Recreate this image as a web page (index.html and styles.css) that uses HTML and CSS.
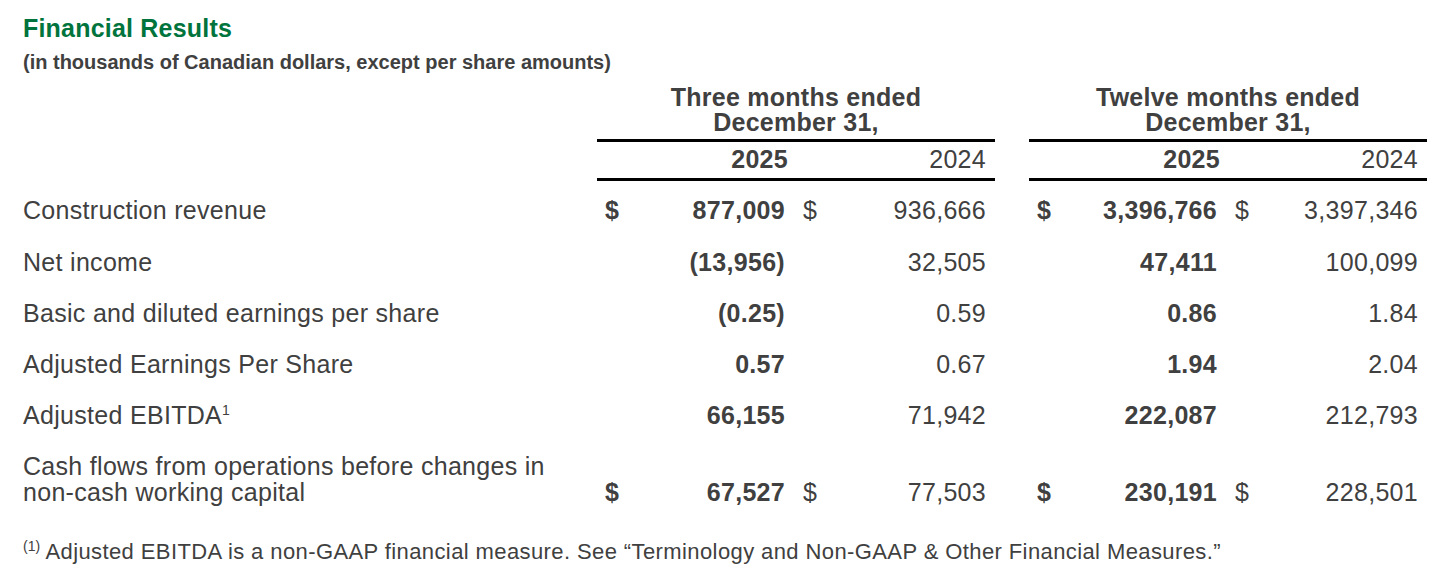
FILE: index.html
```html
<!DOCTYPE html>
<html>
<head>
<meta charset="utf-8">
<link rel="stylesheet" href="styles.css">
</head>
<body>
<div class="page">
  <h1 class="title">Financial Results</h1>
  <p class="subtitle">(in thousands of Canadian dollars, except per share amounts)</p>
  <table class="fin">
    <colgroup>
      <col class="c-label">
      <col class="c-cur"><col class="c-val"><col class="c-cur2"><col class="c-val2">
      <col class="c-gap">
      <col class="c-cur"><col class="c-val"><col class="c-cur2"><col class="c-val2">
    </colgroup>
    <thead>
      <tr class="period">
        <th></th>
        <th colspan="4" class="grp">Three months ended<br>December 31,</th>
        <th></th>
        <th colspan="4" class="grp">Twelve months ended<br>December 31,</th>
      </tr>
      <tr class="years">
        <th></th>
        <th colspan="2" class="yr cur-yr">2025</th>
        <th colspan="2" class="yr prev-yr">2024</th>
        <th></th>
        <th colspan="2" class="yr cur-yr">2025</th>
        <th colspan="2" class="yr prev-yr">2024</th>
      </tr>
    </thead>
    <tbody>
      <tr>
        <td class="label">Construction revenue</td>
        <td class="cur b">$</td><td class="val b">877,009</td><td class="cur2">$</td><td class="val2">936,666</td>
        <td></td>
        <td class="cur b">$</td><td class="val b">3,396,766</td><td class="cur2">$</td><td class="val2">3,397,346</td>
      </tr>
      <tr>
        <td class="label">Net income</td>
        <td class="cur"></td><td class="val b">(13,956)</td><td class="cur2"></td><td class="val2">32,505</td>
        <td></td>
        <td class="cur"></td><td class="val b">47,411</td><td class="cur2"></td><td class="val2">100,099</td>
      </tr>
      <tr>
        <td class="label">Basic and diluted earnings per share</td>
        <td class="cur"></td><td class="val b">(0.25)</td><td class="cur2"></td><td class="val2">0.59</td>
        <td></td>
        <td class="cur"></td><td class="val b">0.86</td><td class="cur2"></td><td class="val2">1.84</td>
      </tr>
      <tr>
        <td class="label">Adjusted Earnings Per Share</td>
        <td class="cur"></td><td class="val b">0.57</td><td class="cur2"></td><td class="val2">0.67</td>
        <td></td>
        <td class="cur"></td><td class="val b">1.94</td><td class="cur2"></td><td class="val2">2.04</td>
      </tr>
      <tr>
        <td class="label">Adjusted EBITDA<sup class="fn">1</sup></td>
        <td class="cur"></td><td class="val b">66,155</td><td class="cur2"></td><td class="val2">71,942</td>
        <td></td>
        <td class="cur"></td><td class="val b">222,087</td><td class="cur2"></td><td class="val2">212,793</td>
      </tr>
      <tr>
        <td class="label">Cash flows from operations before changes in<br>non-cash working capital</td>
        <td class="cur b">$</td><td class="val b">67,527</td><td class="cur2">$</td><td class="val2">77,503</td>
        <td></td>
        <td class="cur b">$</td><td class="val b">230,191</td><td class="cur2">$</td><td class="val2">228,501</td>
      </tr>
    </tbody>
  </table>
  <p class="footnote"><sup class="fn-mark">(1)</sup> Adjusted EBITDA is a non-GAAP financial measure. See “Terminology and Non-GAAP &amp; Other Financial Measures.”</p>
</div>
</body>
</html>
```

FILE: styles.css
```css
html, body {
  margin: 0;
  padding: 0;
  background: #ffffff;
}

body {
  font-family: "Liberation Sans", Arial, sans-serif;
  color: #404040;
}

.page {
  padding: 0 23px;
  width: 1404px;
}

.title {
  margin: 0;
  padding-top: 15.3px;
  font-size: 25px;
  line-height: 26px;
  font-weight: bold;
  letter-spacing: 0.2px;
  color: #00743c;
}

.subtitle {
  margin: 10.2px 0 0 0;
  font-size: 20px;
  line-height: 22px;
  font-weight: bold;
  letter-spacing: 0;
}

.fin {
  border-collapse: separate;
  border-spacing: 0;
  table-layout: fixed;
  width: 1404px;
  font-size: 25px;
  letter-spacing: 0.3px;
  margin-top: 11.2px;
}

.c-label { width: 574px; }
.c-cur { width: 43px; }
.c-val { width: 150px; }
.c-cur2 { width: 50px; }
.c-val2 { width: 155px; }
.c-gap { width: 34px; }

.fin th, .fin td {
  padding: 0;
  vertical-align: bottom;
  white-space: nowrap;
}

.fin .period th {
  line-height: 25.5px;
  font-weight: bold;
  letter-spacing: 0.25px;
}

.fin .grp {
  text-align: center;
  padding-bottom: 3px;
  border-bottom: 3px solid #000;
}

.fin .years th {
  line-height: 26px;
  padding-top: 4.2px;
  padding-bottom: 6.3px;
}

.fin .yr {
  border-bottom: 3px solid #000;
  text-align: right;
}

.fin .cur-yr {
  font-weight: bold;
  padding-right: 2px;
}

.fin .prev-yr {
  font-weight: normal;
  padding-right: 9px;
}

.fin tbody td {
  line-height: 26px;
  padding-top: 12.6px;
  padding-bottom: 12.6px;
}

.fin tbody tr:first-child td {
  padding-top: 16.3px;
}

.fin .label {
  text-align: left;
}

.fin .cur {
  text-align: left;
  padding-left: 8px;
}

.fin .val {
  text-align: right;
  padding-right: 5px;
}

.fin .cur2 {
  text-align: left;
  padding-left: 13px;
}

.fin .val2 {
  text-align: right;
  padding-right: 9px;
}

.fin .b {
  font-weight: bold;
}

.fn {
  font-size: 14px;
  line-height: 0;
  vertical-align: 9px;
  letter-spacing: 0;
}

.footnote {
  margin: 22px 0 0 0;
  font-size: 22px;
  line-height: 24px;
  letter-spacing: 0.4px;
}

.fn-mark {
  font-size: 14px;
  line-height: 0;
  vertical-align: 8px;
  letter-spacing: 0;
}
```
